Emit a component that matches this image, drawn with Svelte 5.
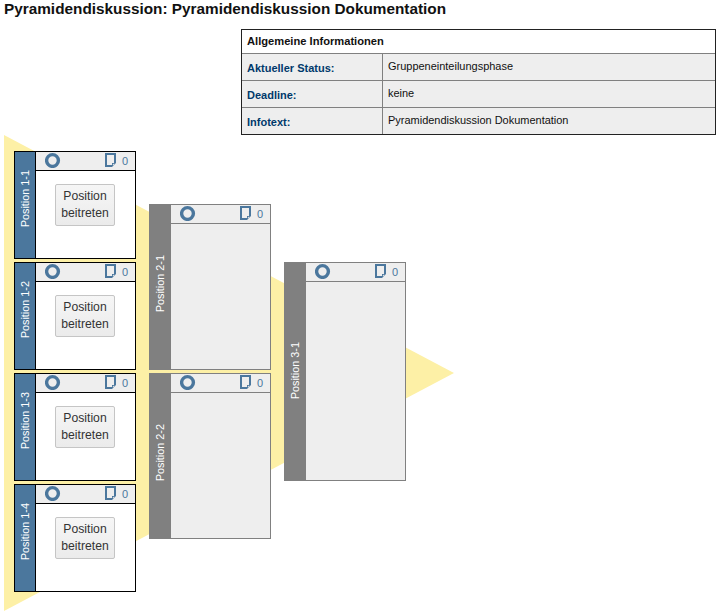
<script>
  const info = [
    ['Aktueller Status:', 'Gruppeneinteilungsphase'],
    ['Deadline:', 'keine'],
    ['Infotext:', 'Pyramidendiskussion Dokumentation'],
  ];
  const levels = [
    { open: true, height: 108, shift: 12, items: ['Position 1-1', 'Position 1-2', 'Position 1-3', 'Position 1-4'] },
    { open: false, height: 166, shift: 7, items: ['Position 2-1', 'Position 2-2'] },
    { open: false, height: 219, shift: 2, items: ['Position 3-1'] },
  ];
</script>

<main>
  <h1>Pyramidendiskussion: Pyramidendiskussion Dokumentation</h1>

  <section class="info">
    <div class="caption">Allgemeine Informationen</div>
    {#each info as [label, value]}
      <div class="row">
        <div class="label">{label}</div>
        <div class="value">{value}</div>
      </div>
    {/each}
  </section>

  <section class="pyramid">
    <svg class="triangle" width="450" height="476" viewBox="0 0 450 476">
      <path d="M0 0L450 238L0 476Z" fill="#fdf0a6" />
    </svg>
    <div class="levels">
      {#each levels as level}
        <div class="level">
          {#each level.items as name}
            <article class:open={level.open} style="height: {level.height}px">
              <div class="tab" style="padding-bottom: {level.shift}px"><span>{name}</span></div>
              <div class="body">
                <header>
                  <svg class="ring" width="16" height="16" viewBox="0 0 16 16">
                    <circle cx="7.5" cy="8.5" r="5.9" fill="none" stroke="#4b779d" stroke-width="3.4" />
                  </svg>
                  <svg class="note" width="12" height="15" viewBox="0 0 12 15">
                    <path d="M7 13H1V1H10V10" fill="none" stroke="#4b779d" stroke-width="2" />
                    <path d="M7 14V10H11Z" fill="#4b779d" />
                    <path d="M8 12.2V11H9.3Z" fill="#eee" stroke="#eee" stroke-width=".3" />
                  </svg>
                  <span class="count">0</span>
                </header>
                {#if level.open}
                  <button type="button">Position<br />beitreten</button>
                {/if}
              </div>
            </article>
          {/each}
        </div>
      {/each}
    </div>
  </section>
</main>

<style>
  :global(body) {
    background: #fff;
  }
  main {
    box-sizing: border-box;
    width: 719px;
    height: 611px;
    overflow: hidden;
    font-family: "Liberation Sans", Arial, sans-serif;
    font-size: 11px;
    color: #111;
  }
  h1 {
    margin: 0;
    height: 29px;
    padding-left: 4px;
    font-size: 15.34px;
    line-height: 18px;
    box-sizing: border-box;
  }
  .info {
    box-sizing: border-box;
    width: 475px;
    height: 106px;
    margin-left: 241px;
    border: 1px solid #222;
  }
  .caption {
    height: 23px;
    padding-left: 5px;
    font-size: 11.15px;
    font-weight: bold;
    line-height: 23px;
  }
  .row {
    display: flex;
    height: 26px;
    border-top: 1px solid #808080;
    background: #eee;
  }
  .label {
    box-sizing: border-box;
    width: 141px;
    padding: 1px 0 0 5px;
    border-right: 1px solid #808080;
    color: #00396b;
    font-weight: bold;
    line-height: 26px;
  }
  .value {
    padding-left: 5px;
    font-size: 10.97px;
    line-height: 25px;
  }
  .pyramid {
    position: relative;
    height: 476px;
    margin-left: 4px;
  }
  .triangle {
    position: absolute;
    left: 0;
    top: 0;
  }
  .levels {
    position: relative;
    display: flex;
    align-items: center;
    gap: 13px;
    box-sizing: border-box;
    height: 473px;
    padding-left: 10px;
  }
  .level {
    display: flex;
    flex-direction: column;
    gap: 3px;
  }
  article {
    display: flex;
    box-sizing: border-box;
    width: 122px;
    border: 1px solid #808080;
    background: #eee;
  }
  .tab {
    display: flex;
    align-items: center;
    justify-content: center;
    box-sizing: border-box;
    width: 21px;
    border-right: 1px solid #808080;
    background: #808080;
    color: #fff;
    font-size: 10.85px;
  }
  .tab span {
    writing-mode: vertical-rl;
    transform: rotate(180deg);
    white-space: nowrap;
    line-height: 13px;
  }
  .body {
    flex: 1;
  }
  header {
    display: flex;
    align-items: flex-start;
    height: 18px;
    padding-left: 9px;
    border-bottom: 1px solid #808080;
    background: #eee;
  }
  .note {
    margin: 1px 0 0 44px;
  }
  .count {
    margin: 3px 0 0 5px;
    color: #4b779d;
    line-height: 13px;
  }
  .open {
    border-color: #000;
    background: #fff;
  }
  .open .tab {
    border-color: #000;
    background: #4b779d;
  }
  .open header {
    border-color: #000;
  }
  button {
    display: block;
    box-sizing: border-box;
    width: 60px;
    height: 42px;
    margin: 13px 0 0 19px;
    padding: 0;
    border: 1px solid #c5c5c5;
    border-radius: 2px;
    background: linear-gradient(#f6f6f6, #ebebeb);
    color: #333;
    font: 12.2px/17px "Liberation Sans", Arial, sans-serif;
  }
</style>
